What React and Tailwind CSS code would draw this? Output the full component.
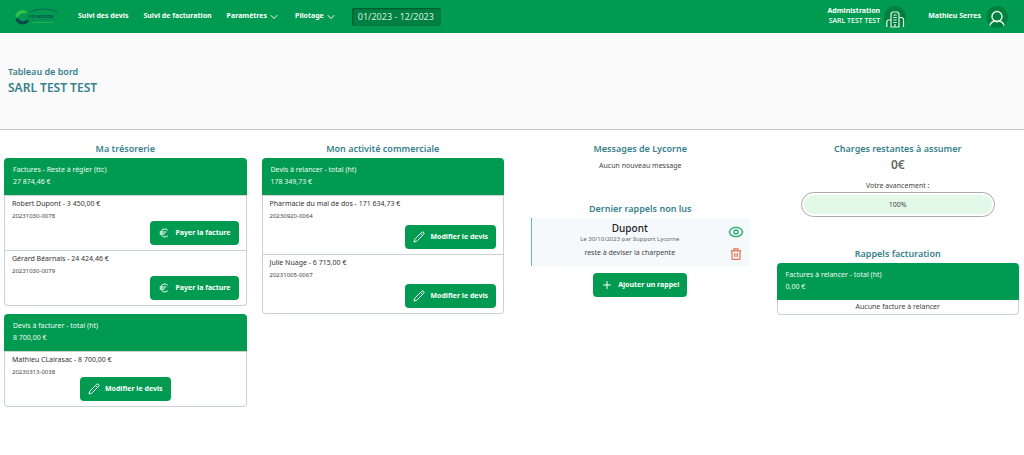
import { Eye, ChevronDown, Pencil, Plus, Euro } from "lucide-react";

function Logo() {
  return (
    <svg viewBox="0 0 46 18" className="h-[18px] w-[46px]" role="img" aria-label="Co'Gestion">
      <path d="M12 3.500C7 2 2.500 4.500 1 8.500L4.500 8C5.500 6 7.500 5 11 5.500Z" fill="#3fc451" />
      <path d="M12.500 5A5.500 5.500 0 0 0 3 9" fill="none" stroke="#35bd4c" strokeWidth="2.500" />
      <path d="M3 10.500C4 15.500 11 16.500 14 12" fill="none" stroke="#07454f" strokeWidth="3" />
      <path d="M16.500 4C22 .2 37 .2 43 4" fill="none" stroke="#096052" strokeWidth="1" />
      <text x="15" y="9.500" fontSize="4" fontWeight="800" fill="#084c52" fontFamily="Noto Sans, sans-serif">CO'GESTION</text>
      <path d="M17 12.500C24 11 34 11 42 12" fill="none" stroke="#0b7d55" strokeWidth=".6" />
      <path d="M18 14.500H39" stroke="#2db357" strokeWidth=".8" />
    </svg>
  );
}

function Building() {
  return (
    <svg viewBox="0 0 20 20" className="mt-1 size-5" fill="none" stroke="#e5f5ec" strokeWidth="1.200" aria-hidden="true">
      <path d="M6 18V4.500L7.500 3H12.500L14 4.500V18H6ZM6 11H3L1.800 12.500V18M14 8.500H17L18.500 10V18M8.300 6H11.700M8.300 8.500H11.700M8.300 11H11.700M8.300 13.500H11.700M10 15V18" />
    </svg>
  );
}

function Person() {
  return (
    <svg viewBox="0 0 20 20" className="mt-0.5 size-5" fill="none" stroke="#e5f5ec" strokeWidth="1.400" aria-hidden="true">
      <circle cx="10" cy="8.500" r="5" />
      <path d="M3 17.500C3.500 15 5.500 13.500 7.800 13C9.200 13.600 10.800 13.600 12.200 13C14.500 13.500 16.500 15 17 17.500" />
    </svg>
  );
}

function Trash() {
  return (
    <svg viewBox="0 0 12 12" className="size-3" fill="none" stroke="currentColor" strokeWidth="1.200" aria-hidden="true">
      <path d="M.8 2.800H11.200M4 2.500V.9H8V2.500M2 3V10.300Q2 11.300 3 11.300H9Q10 11.300 10 10.300V3M4.800 5V9M7.200 5V9" />
    </svg>
  );
}

function Action({ icon: Icon, children }) {
  return (
    <button type="button" className="flex h-6 items-center gap-[5px] rounded-[4px] bg-[#009b50] px-2 text-[7px] font-bold text-white">
      <Icon className="size-3" strokeWidth={2} aria-hidden="true" />
      {children}
    </button>
  );
}

function Title({ children }) {
  return <h2 className="text-center text-[9px] leading-[18px] font-semibold text-[#357f8b]">{children}</h2>;
}

function Card({ title, total, children }) {
  return (
    <section>
      <header className="rounded-t-[4px] bg-[#009b50] px-[9px] pt-1.5 pb-[7px] text-[7px] leading-[12px] text-[#eefaf3]">
        <h3>{title}</h3>
        <p>{total}</p>
      </header>
      <div className="rounded-b-[4px] border-x border-b border-[#ccd3d2] bg-white">{children}</div>
    </section>
  );
}

function Row({ name, code, children }) {
  return (
    <div className="border-t border-[#ccd3d2] px-[7px] pt-0.5 pb-[5px]">
      <p className="text-[7px] leading-[12px] text-[#333]">{name}</p>
      <p className="text-[6px] leading-[12px] text-[#444]">{code}</p>
      {children}
    </div>
  );
}

export default function App() {
  return (
    <div className="min-h-screen bg-white font-['Noto_Sans',sans-serif] text-[#444]">
      <header className="flex h-[33px] items-center bg-[#009b50] pr-4 pl-[14px] text-[7px] font-bold text-white">
        <a href="#accueil"><Logo /></a>
        <nav className="ml-[18px] flex items-center gap-[15px]">
          <a href="#devis">Suivi des devis</a>
          <a href="#facturation">Suivi de facturation</a>
          <button type="button" className="flex items-center gap-px">Paramètres <ChevronDown className="size-3" strokeWidth={2} /></button>
          <button type="button" className="flex items-center gap-px">Pilotage <ChevronDown className="size-3" strokeWidth={2} /></button>
          <input aria-label="Période" defaultValue="01/2023 - 12/2023" className="h-[18px] w-[89px] rounded-[2px] bg-[#007f42] px-1.5 text-[9px] font-normal text-[#d5efdf] shadow-[inset_1px_1px_2px_#00542c]" />
        </nav>
        <div className="ml-auto flex items-center gap-1">
          <p className="pb-0.5 text-right leading-[10px]">Administration<br /><span className="font-medium">SARL TEST TEST</span></p>
          <span className="flex size-[22px] items-center justify-center rounded-full bg-[#00803f]"><Building /></span>
        </div>
        <div className="ml-[22px] flex items-center gap-[5px]">
          <p>Mathieu Serres</p>
          <span className="flex size-[22px] items-center justify-center rounded-full bg-[#00803f]"><Person /></span>
        </div>
      </header>

      <div className="flex h-[97px] flex-col justify-center border-b border-[#c9c9c9] bg-[#fafafa] px-2 pb-px font-semibold text-[#357f8b]">
        <p className="text-[9px] leading-[14px]">Tableau de bord</p>
        <h1 className="text-[12px] leading-[17px]">SARL TEST TEST</h1>
      </div>

      <main className="grid grid-cols-4 items-start gap-[15px] pt-[10px] pr-[5px] pl-1">
        <div>
          <Title>Ma trésorerie</Title>
          <Card title="Factures - Reste à régler (ttc)" total="27 874,46 €">
            <Row name="Robert Dupont - 3 450,00 €" code="20231030-0078">
              <div className="-mt-px flex justify-end"><Action icon={Euro}>Payer la facture</Action></div>
            </Row>
            <Row name="Gérard Béarnais - 24 424,46 €" code="20231030-0079">
              <div className="-mt-px flex justify-end"><Action icon={Euro}>Payer la facture</Action></div>
            </Row>
          </Card>
          <div className="mt-2">
            <Card title="Devis à facturer - total (ht)" total="8 700,00 €">
              <Row name="Mathieu CLairasac - 8 700,00 €" code="20230313-0038">
                <div className="-mt-px flex justify-center"><Action icon={Pencil}>Modifier le devis</Action></div>
              </Row>
            </Card>
          </div>
        </div>

        <div>
          <Title>Mon activité commerciale</Title>
          <Card title="Devis à relancer - total (ht)" total="178 349,73 €">
            <Row name="Pharmacie du mal de dos - 171 634,73 €" code="20230920-0064">
              <div className="mt-[3px] flex justify-end"><Action icon={Pencil}>Modifier le devis</Action></div>
            </Row>
            <Row name="Julie Nuage - 6 715,00 €" code="20231005-0067">
              <div className="mt-[3px] flex justify-end"><Action icon={Pencil}>Modifier le devis</Action></div>
            </Row>
          </Card>
        </div>

        <div className="px-3">
          <Title>Messages de Lycorne</Title>
          <p className="pt-px text-center text-[7px] leading-[14px]">Aucun nouveau message</p>
          <div className="mt-[27px]">
            <Title>Dernier rappels non lus</Title>
            <article className="flex h-12 items-center rounded-r-[3px] border-l border-[#5cc290] bg-[#f5f9fb] pr-1.5">
              <div className="flex-1 pb-0.5 text-center">
                <h3 className="text-[10px] leading-[12px] font-medium text-[#222]">Dupont</h3>
                <p className="text-[6px] leading-[11px] text-[#666]">Le 30/10/2023 par Support Lycorne</p>
                <p className="text-[7px] leading-[16px]">reste à deviser la charpente</p>
              </div>
              <div className="flex flex-col items-center gap-2">
                <button type="button" aria-label="Marquer comme lu" className="text-[#25a868]"><Eye className="size-4" /></button>
                <button type="button" aria-label="Supprimer" className="text-[#e2704e]"><Trash /></button>
              </div>
            </article>
            <div className="mt-[7px] flex justify-center"><Action icon={Plus}>Ajouter un rappel</Action></div>
          </div>
        </div>

        <div>
          <Title>Charges restantes à assumer</Title>
          <p className="text-center text-[12px] leading-[14px] font-semibold text-[#666]">0€</p>
          <p className="mt-2 text-center text-[7px] leading-[12px]">Votre avancement :</p>
          <div className="mx-6 rounded-full border border-[#aaa] p-0.5">
            <div role="progressbar" aria-valuenow={100} aria-label="Votre avancement" className="rounded-full bg-[#e2f9e7] text-center text-[7px] leading-[19px]">100%</div>
          </div>
          <div className="mt-7">
            <Title>Rappels facturation</Title>
            <Card title="Factures à relancer - total (ht)" total="0,00 €">
              <p className="text-center text-[7px] leading-[14px]">Aucune facture à relancer</p>
            </Card>
          </div>
        </div>
      </main>
    </div>
  );
}
